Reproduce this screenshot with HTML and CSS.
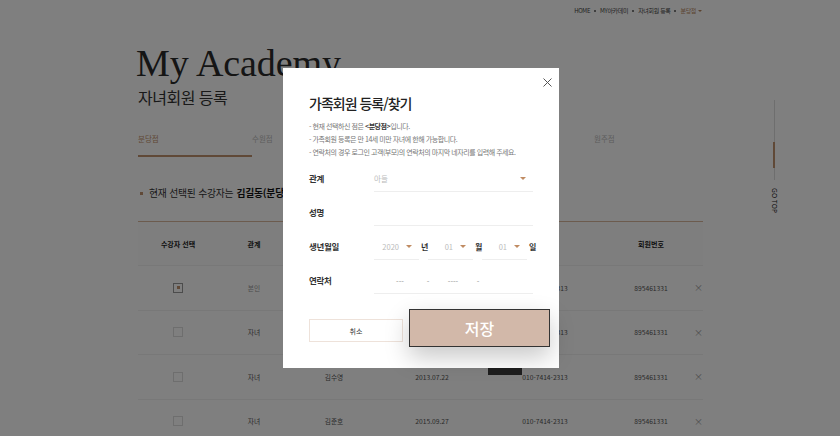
FILE: index.html
```html
<!DOCTYPE html>
<html lang="ko">
<head>
<meta charset="utf-8">
<title>My Academy - 자녀회원 등록</title>
<link rel="stylesheet" href="styles.css">
</head>
<body>
<div class="topbar">
  <span>HOME</span><i class="dot"></i>
  <span>MY아카데미</span><i class="dot"></i>
  <span>자녀회원 등록</span><i class="dot"></i>
  <span class="cur">분당점<i class="caret"></i></span>
</div>

<main class="wrap">
  <h1 class="title">My Academy</h1>
  <h2 class="subtitle">자녀회원 등록</h2>

  <nav class="tabs">
    <span class="tab on">분당점</span>
    <span class="tab">수원점</span>
    <span class="tab hid">일산점</span>
    <span class="tab hid">인천점</span>
    <span class="tab">원주점</span>
  </nav>

  <p class="info"><i class="bullet"></i>현재 선택된 수강자는 <b>김길동(분당점)</b>입니다.</p>

  <div class="table">
    <div class="tr th">
      <span>수강자 선택</span><span>관계</span><span class="hid">성명</span><span class="hid">생년월일</span><span class="hid">연락처</span><span class="num">회원번호</span><span></span>
    </div>
    <div class="tr">
      <span><i class="chk on"></i></span><span class="light">본인</span><span class="hid">김길동</span><span class="hid">2011.03.15</span><span>010-7414-2313</span><span class="num">895461331</span><span class="del">×</span>
    </div>
    <div class="tr">
      <span><i class="chk"></i></span><span>자녀</span><span class="hid">김수아</span><span class="hid">2012.05.11</span><span>010-7414-2313</span><span class="num">895461331</span><span class="del">×</span>
    </div>
    <div class="tr">
      <span><i class="chk"></i></span><span>자녀</span><span>김수영</span><span>2013.07.22</span><span>010-7414-2313</span><span class="num">895461331</span><span class="del">×</span>
    </div>
    <div class="tr">
      <span><i class="chk"></i></span><span>자녀</span><span>김준호</span><span>2015.09.27</span><span>010-7414-2313</span><span class="num">895461331</span><span class="del">×</span>
    </div>
  </div>
</main>

<div class="tip"></div>

<div class="gotop"><i class="gotop-line"></i><span>GO TOP</span></div>

<div class="dim"></div>

<section class="modal">
  <button class="close" aria-label="닫기">
    <svg width="9" height="9" viewBox="0 0 9 9"><path d="M0.5 0.5L8.5 8.5M8.5 0.5L0.5 8.5" stroke="#555" stroke-width="1" fill="none"/></svg>
  </button>
  <h3 class="m-title">가족회원 등록/찾기</h3>
  <ul class="notes">
    <li>- 현재 선택하신 점은 <b>&lt;분당점&gt;</b>입니다.</li>
    <li>- 가족회원 등록은 만 14세 미만 자녀에 한해 가능합니다.</li>
    <li>- 연락처의 경우 로그인 고객(부모)의 연락처의 마지막 네자리를 입력해 주세요.</li>
  </ul>

  <div class="form">
    <div class="row">
      <label>관계</label>
      <div class="field sel"><span class="ph">아들</span><i class="arr"></i></div>
    </div>
    <div class="row">
      <label>성명</label>
      <div class="field"></div>
    </div>
    <div class="row">
      <label>생년월일</label>
      <div class="birth">
        <div class="bsel"><span>2020</span><i class="arr"></i></div><span class="unit">년</span>
        <div class="bsel"><span>01</span><i class="arr"></i></div><span class="unit">월</span>
        <div class="bsel"><span>01</span><i class="arr"></i></div><span class="unit">일</span>
      </div>
    </div>
    <div class="row">
      <label>연락처</label>
      <div class="field phone"><span class="p1">---</span><span class="pd">-</span><span class="p2">----</span><span class="pd">-</span></div>
    </div>
  </div>

  <div class="btns">
    <button class="cancel">취소</button>
    <button class="save">저장</button>
  </div>
</section>
</body>
</html>
```

FILE: styles.css
```css
* { box-sizing: border-box; margin: 0; padding: 0; }
html, body { width: 840px; height: 436px; overflow: hidden; }
body {
  background: #fff;
  font-family: "Noto Sans CJK KR", "Noto Sans", sans-serif;
  color: #333;
  position: relative;
}
i { display: block; font-style: normal; }
.hid { visibility: hidden; }

/* breadcrumb */
.topbar {
  display: flex; justify-content: flex-end; align-items: center;
  height: 22px; padding-right: 138px; gap: 4px;
  font-size: 6px; line-height: 8px; color: #444; letter-spacing: -0.35px;
}
.topbar .dot { width: 2px; height: 2px; border-radius: 50%; background: #555; }
.topbar .cur { color: #b8875f; display: flex; align-items: center; gap: 2px; }
.caret { width: 0; height: 0; border-left: 2px solid transparent; border-right: 2px solid transparent; border-top: 2.5px solid #b8875f; }

/* page */
.wrap { margin-left: 138px; width: 565px; }
.title {
  font-family: "Liberation Serif", serif; font-weight: normal;
  font-size: 38px; line-height: 36px; margin-top: 23px; margin-left: -2px;
  color: #2a2a2a; letter-spacing: -0.1px;
}
.subtitle { font-size: 16px; line-height: 20px; margin-top: 6px; font-weight: normal; color: #333; letter-spacing: -0.5px; }

.tabs { display: flex; margin-top: 26px; }
.tab { width: 114px; flex-shrink: 0; font-size: 7.5px; line-height: 12px; padding-bottom: 10px; color: #bbb; border-bottom: 2px solid transparent; }
.tab.on { color: #c1906a; border-bottom-color: #c1936e; }

.info { margin-top: 30px; display: flex; align-items: center; font-size: 9.8px; line-height: 12px; color: #333; letter-spacing: -0.2px; }
.info .bullet { width: 3px; height: 3px; background: #c1936e; margin: 0 6px 0 2px; }
.info b { font-weight: bold; margin-left: 3px; color: #111; }

.table { margin-top: 22px; border-top: 1px solid #d9b79c; }
.tr {
  display: grid; grid-template-columns: 80px 72px 88px 108px 118px 87px 12px;
  height: 44.5px; align-items: center; text-align: center;
  border-bottom: 1px solid #f0f0f0;
  font-size: 6.7px; color: #555;
}
.tr.th { height: 44px; color: #222; font-weight: bold; font-size: 7px; background: #fdfdfd; }
.tr .num { padding-left: 7px; }
.tr .light { color: #999; }
.chk { width: 10px; height: 10px; border: 1px solid #ddd; margin: 0 auto; position: relative; background: #fff; }
.chk.on { border-color: #999; }
.chk.on::after { content: ""; position: absolute; left: 2.5px; top: 2.5px; width: 3px; height: 3px; background: #c1936e; }
.del { font-size: 9px; color: #999; text-align: right; }

.tip { position: absolute; left: 488px; top: 340px; width: 34px; height: 35px; background: #3c3c3c; }

.gotop { position: absolute; left: 770px; top: 100px; display: flex; flex-direction: column; align-items: center; width: 8px; }
.gotop-line { width: 1px; height: 80px; background: #ddd; position: relative; }
.gotop-line::after { content: ""; position: absolute; left: -0.5px; top: 42px; width: 2px; height: 26px; background: #c1936e; }
.gotop span { writing-mode: vertical-rl; font-size: 6.5px; color: #222; margin-top: 8px; letter-spacing: 0.2px; font-family: "Noto Sans", sans-serif; }

.dim { position: fixed; inset: 0; background: rgba(0, 0, 0, 0.5); }

/* modal */
.modal {
  position: absolute; left: 283px; top: 68px; width: 276px; height: 300px;
  background: #fff; padding: 26px 26px 0 26px;
}
.close { position: absolute; right: 7px; top: 10px; width: 9px; height: 9px; border: 0; background: none; display: block; }
.close svg { display: block; }
.m-title { font-size: 14px; line-height: 18px; font-weight: 500; color: #222; letter-spacing: -1px; }
.notes { list-style: none; margin-top: 8px; font-size: 7px; line-height: 13px; color: #777; letter-spacing: -0.45px; }
.notes b { color: #333; font-weight: bold; }

.form { margin-top: 6px; display: flex; flex-direction: column; gap: 7px; }
.row { display: flex; height: 27px; }
.row label { width: 65px; flex-shrink: 0; font-size: 8.5px; font-weight: bold; color: #333; display: flex; align-items: center; height: 26px; letter-spacing: -0.3px; }
.field { width: 159px; flex-shrink: 0; height: 27px; border-bottom: 1px solid #eee; display: flex; align-items: center; font-size: 7.5px; }
.sel { justify-content: space-between; padding-right: 7px; }
.ph { color: #bbb; }
.arr { width: 0; height: 0; border-left: 3px solid transparent; border-right: 3px solid transparent; border-top: 3.5px solid #c08b62; }

.birth { display: flex; height: 27px; flex-shrink: 0; }
.bsel { width: 45px; flex-shrink: 0; height: 27px; border-bottom: 1px solid #eee; display: flex; align-items: center; justify-content: flex-end; gap: 7px; padding-right: 7px; font-size: 7.5px; color: #bbb; }
.unit { width: 9px; flex-shrink: 0; height: 26px; padding-left: 2px; display: flex; align-items: center; font-size: 8px; font-weight: bold; color: #333; }

.phone { font-size: 7.5px; color: #999; }
.phone .p1 { width: 52px; text-align: center; }
.phone .pd { width: 4px; text-align: center; }
.phone .p2 { width: 46px; text-align: center; }

.btns { display: flex; align-items: flex-end; gap: 6px; margin-top: 15px; }
.cancel {
  width: 94px; height: 23px; margin-bottom: 5px; background: #fff; flex-shrink: 0;
  border: 1px solid #eee2da; font-family: inherit; font-size: 7px; color: #333;
}
.save {
  width: 141px; height: 38px; background: #d2b8a9; border: 1px solid #333; flex-shrink: 0;
  font-family: inherit; font-size: 16px; font-weight: 500; color: #fff;
  box-shadow: 0 10px 24px rgba(0, 0, 0, 0.22);
}
```
